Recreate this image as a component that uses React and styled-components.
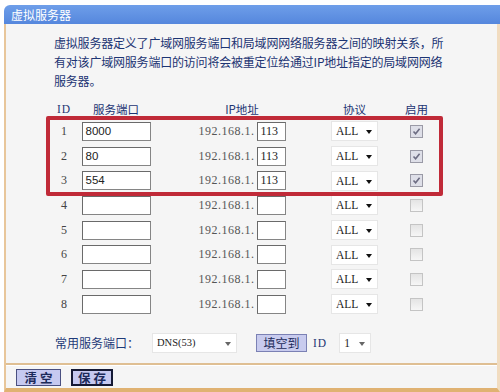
import React from "react";
import styled, { createGlobalStyle } from "styled-components";

const GlobalStyle = createGlobalStyle`
	html, body {
		margin: 0;
		padding: 0;
		background: #fff;
	}
	body {
		width: 500px;
		height: 392px;
		overflow: hidden;
		font-family: "Noto Sans CJK SC", "Liberation Sans", sans-serif;
	}
`;

const serif = '"Liberation Serif", "Noto Sans CJK SC", serif';

const Page = styled.div`
	box-sizing: border-box;
	width: 500px;
	height: 392px;
	padding: 5px 0 0 4px;
	display: flex;
	flex-direction: column;
`;

const TitleBar = styled.div`
	height: 19px;
	flex-shrink: 0;
	padding-left: 7px;
	background: linear-gradient(#6e9ee9, #5587dd);
	border-top-left-radius: 6px;
	color: #fff;
	font-size: 12px;
	line-height: 19px;
`;

const Body = styled.div`
	flex: 1;
	display: flex;
	flex-direction: column;
	background: #f5f5f5;
	border-left: 2px solid #e8c69a;
	border-right: 3px solid #f1dcc0;
	border-bottom: 4px solid #e0b272;
`;

const Intro = styled.p`
	margin: 0;
	padding: 8.5px 0 0 48px;
	font-size: 12px;
	letter-spacing: -0.2px;
	line-height: 19px;
	color: #1c3473;
`;

const TableWrap = styled.div`
	position: relative;
	margin: 9.5px 0 0 43px;
	display: grid;
	grid-template-columns: 30px 74px 178px 47px 77px;
	grid-template-rows: 20px;
	grid-auto-rows: 24.7px;
	align-items: center;
	justify-items: center;
`;

const Head = styled.div`
	font-family: ${(p) => (p.$latin ? serif : '"Noto Sans CJK SC", sans-serif')};
	font-size: ${(p) => (p.$latin ? "11.5px" : "11.5px")};
	letter-spacing: ${(p) => (p.$latin ? "1px" : "0")};
	color: #1c3473;
	line-height: 20px;
`;

const Num = styled.div`
	font-family: ${serif};
	font-size: 12px;
	color: #444;
`;

const TextBox = styled.div`
	box-sizing: border-box;
	width: ${(p) => p.$w}px;
	height: 19px;
	padding-left: ${(p) => p.$pad || 3}px;
	background: #fff;
	border: 1px solid #858585;
	border-top-color: #6a6a6a;
	border-left-color: #6a6a6a;
	font-family: ${(p) => (p.$serif ? serif : '"Liberation Sans", sans-serif')};
	font-size: ${(p) => (p.$serif ? "12px" : "11.5px")};
	line-height: 17px;
	color: #222;
`;

const IpCell = styled.div`
	display: flex;
	align-items: center;
	gap: 2px;
`;

const IpPrefix = styled.span`
	font-family: ${serif};
	font-size: 12px;
	letter-spacing: 0.5px;
	color: #555;
`;

const Select = styled.div`
	box-sizing: border-box;
	position: relative;
	width: ${(p) => p.$w}px;
	height: 20px;
	padding-left: ${(p) => p.$pad || 4}px;
	background: #fff;
	border: 1px solid #e6e6e6;
	font-family: ${serif};
	font-size: ${(p) => p.$size || 11.5}px;
	line-height: 18px;
	color: #222;

	&::after {
		content: "";
		position: absolute;
		right: 5px;
		top: 8px;
		border-left: 3.5px solid transparent;
		border-right: 3.5px solid transparent;
		border-top: 4px solid ${(p) => p.$arrow || "#111"};
	}
`;

const Check = styled.span`
	box-sizing: border-box;
	display: flex;
	align-items: center;
	justify-content: center;
	width: 13px;
	height: 13px;
	border: 1px solid ${(p) => (p.$on ? "#9a9aa6" : "#c4c4c4")};
	background: ${(p) => (p.$on ? "#dedfe8" : "linear-gradient(#e4e4e4, #f6f6f6)")};
`;

const RedFrame = styled.div`
	position: absolute;
	left: -3px;
	top: 17px;
	width: 397px;
	height: 80px;
	box-sizing: border-box;
	border: 4px solid #c02a38;
	border-radius: 2px;
	pointer-events: none;
`;

const Controls = styled.div`
	display: flex;
	align-items: center;
	height: 20px;
	margin-top: 16.4px;
	padding-left: 49px;
`;

const Label = styled.span`
	width: 97px;
	font-size: 12px;
	color: #1e3a78;
`;

const SmallButton = styled.div`
	box-sizing: border-box;
	width: 51px;
	height: 18px;
	margin-left: 19px;
	background: #c8cbee;
	border: 1px solid #7b81b4;
	font-size: 12px;
	line-height: 16px;
	text-align: center;
	color: #1c2a5a;
`;

const IdLabel = styled.span`
	margin: 0 12px 0 6px;
	font-family: ${serif};
	font-size: 11.5px;
	letter-spacing: 1px;
	color: #1c3473;
`;

const Footer = styled.div`
	flex: 1;
	display: flex;
	gap: 10px;
	margin-top: 10px;
	padding: 4px 0 0 10px;
	border-top: 2px solid #dfbf93;
	box-shadow: inset 0 1px 0 #fff;
`;

const Button = styled.div`
	box-sizing: border-box;
	width: ${(p) => p.$w}px;
	height: 17px;
	background: #c6c9f0;
	border: ${(p) => (p.$focus ? "2px solid #151a35" : "1px solid #4a5080")};
	font-size: 12.5px;
	font-weight: 700;
	line-height: ${(p) => (p.$focus ? 13 : 15)}px;
	text-align: center;
	color: #1c2a5a;
	white-space: pre;
`;

const CheckMark = () => (
	<svg width="9" height="9" viewBox="0 0 9 9">
		<path d="M1.5 4.5 L3.6 6.8 L7.6 1.8" fill="none" stroke="#6c6c82" strokeWidth="1.6" />
	</svg>
);

const rows = [
	{ port: "8000", ip: "113", on: true },
	{ port: "80", ip: "113", on: true },
	{ port: "554", ip: "113", on: true },
	{ port: "", ip: "", on: false },
	{ port: "", ip: "", on: false },
	{ port: "", ip: "", on: false },
	{ port: "", ip: "", on: false },
	{ port: "", ip: "", on: false }
];

export default function App() {
	return (
		<>
			<GlobalStyle />
			<Page>
				<TitleBar>虚拟服务器</TitleBar>
				<Body>
					<Intro>
						虚拟服务器定义了广域网服务端口和局域网网络服务器之间的映射关系，所
						<br />
						有对该广域网服务端口的访问将会被重定位给通过IP地址指定的局域网网络
						<br />
						服务器。
					</Intro>
					<TableWrap>
						<Head $latin>ID</Head>
						<Head>服务端口</Head>
						<Head>IP地址</Head>
						<Head>协议</Head>
						<Head>启用</Head>
						{rows.map((r, i) => (
							<React.Fragment key={i}>
								<Num>{i + 1}</Num>
								<TextBox $w={69}>{r.port}</TextBox>
								<IpCell>
									<IpPrefix>192.168.1.</IpPrefix>
									<TextBox $w={29} $serif>{r.ip}</TextBox>
								</IpCell>
								<Select $w={47}>ALL</Select>
								<Check $on={r.on}>{r.on && <CheckMark />}</Check>
							</React.Fragment>
						))}
						<RedFrame />
					</TableWrap>
					<Controls>
						<Label>常用服务端口：</Label>
						<Select $w={85} $size={10.5} $arrow="#666">DNS(53)</Select>
						<SmallButton>填空到</SmallButton>
						<IdLabel>ID</IdLabel>
						<Select $w={32} $arrow="#666">1</Select>
					</Controls>
					<Footer>
						<Button $w={45}>清 空</Button>
						<Button $w={42} $focus>保 存</Button>
					</Footer>
				</Body>
			</Page>
		</>
	);
}
